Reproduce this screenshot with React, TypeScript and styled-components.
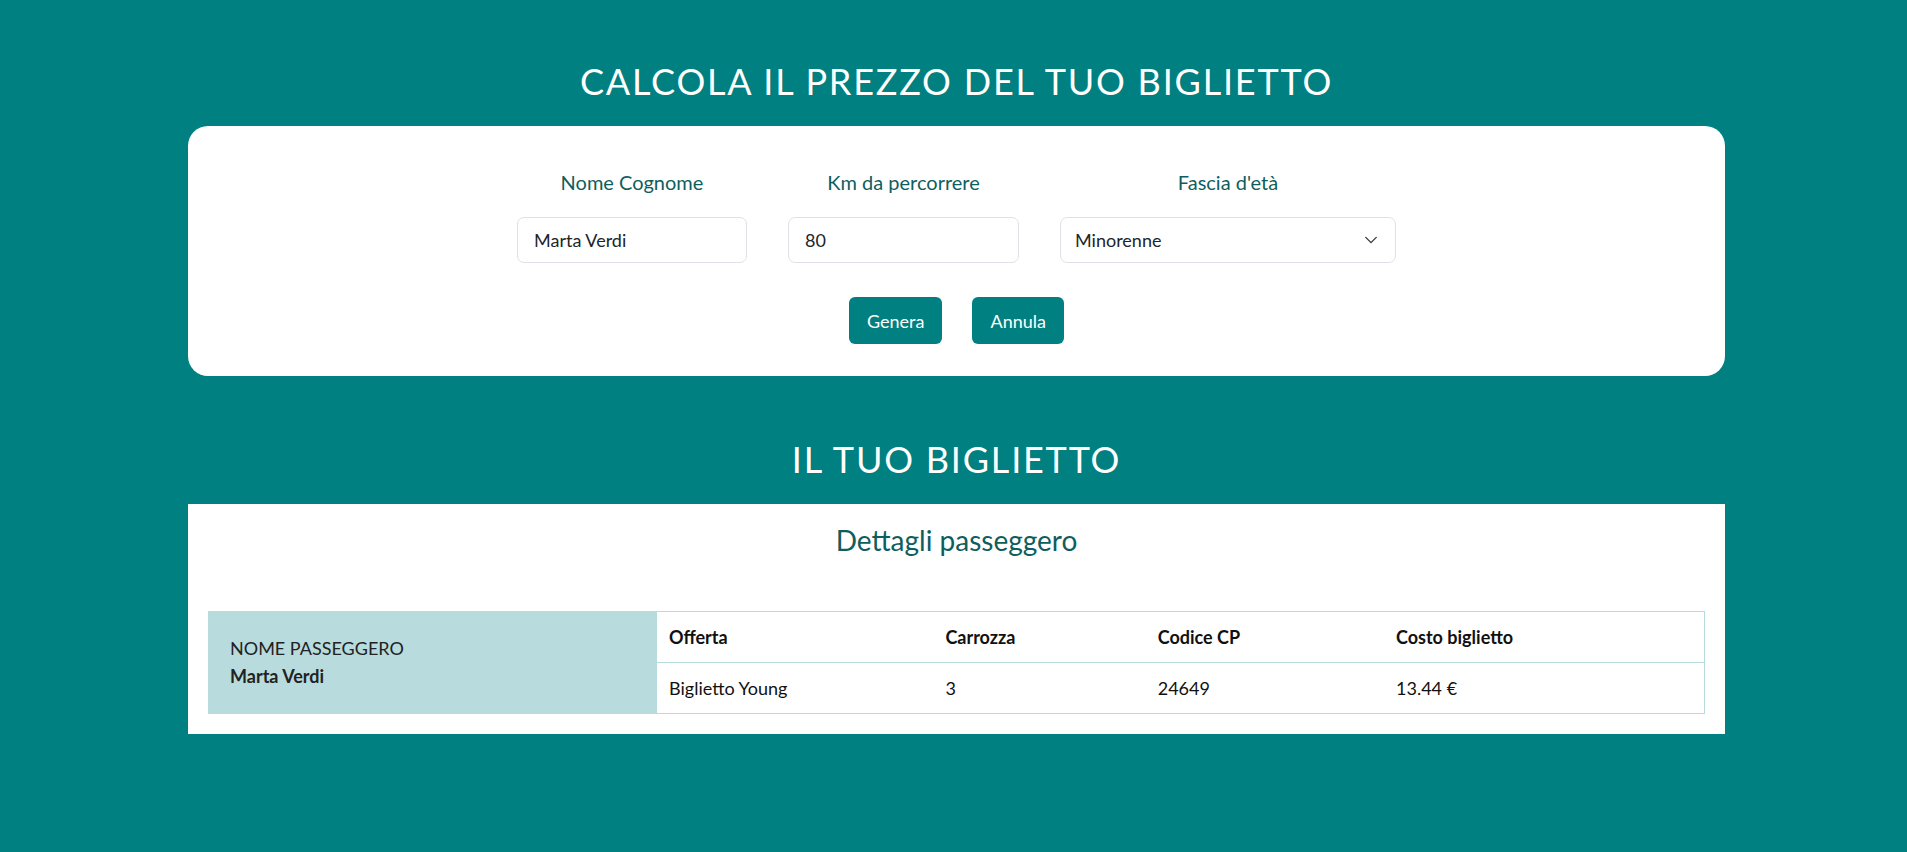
import styled, { createGlobalStyle } from "styled-components";

const teal = "#008080";
const darkTeal = "#0f5e5e";
const paleTeal = "#b8dbdd";

const GlobalStyle = createGlobalStyle`
    * {
        box-sizing: border-box;
    }
    body {
        margin: 0;
        background-color: ${teal};
        font-family: Lato, "Open Sans", sans-serif;
        color: #212529;
    }
`

const Page = styled.main`
    min-height: 100vh;
    padding: 60px 182px 40px 188px;
    background-color: ${teal};
`

const SectionTitle = styled.h1`
    margin: 0 0 23px;
    font-size: 36px;
    line-height: 1.2;
    font-weight: 400;
    letter-spacing: 1.8px;
    color: #ffffff;
    text-align: center;
`

const FormCard = styled.section`
    background-color: #ffffff;
    border-radius: 20px;
    padding: 44px 20px 32px;
    margin-bottom: 62px;
`

const FieldsRow = styled.div`
    display: flex;
    justify-content: center;
    gap: 41px;
`

const Field = styled.label<{ $width: number }>`
    display: flex;
    flex-direction: column;
    align-items: stretch;
    width: ${(p) => p.$width}px;
`

const FieldLabel = styled.span`
    font-size: 20px;
    line-height: 1.2;
    color: ${darkTeal};
    text-align: center;
    margin-bottom: 23px;
`

const TextInput = styled.input`
    height: 46px;
    padding: 0 16px;
    border: 1px solid #dee2e6;
    border-radius: 7px;
    font-family: inherit;
    font-size: 18px;
    color: #212529;
    background: #fff;
    outline: none;
`

const SelectWrap = styled.div`
    position: relative;
`

const Select = styled.select`
    width: 100%;
    height: 46px;
    padding: 0 40px 0 14px;
    border: 1px solid #dee2e6;
    border-radius: 7px;
    font-family: inherit;
    font-size: 18px;
    color: #212529;
    background: #fff;
    appearance: none;
    outline: none;
`

const Chevron = styled.svg`
    position: absolute;
    right: 18px;
    top: 50%;
    width: 14px;
    height: 14px;
    margin-top: -7px;
    pointer-events: none;
`

const ButtonsRow = styled.div`
    display: flex;
    justify-content: center;
    gap: 30px;
    margin-top: 34px;
`

const Button = styled.button`
    height: 47px;
    padding: 0 18px;
    border: none;
    border-radius: 6px;
    background-color: ${teal};
    color: #ffffff;
    font-family: inherit;
    font-size: 18px;
    cursor: pointer;
`

const TicketCard = styled.section`
    background-color: #ffffff;
    padding: 20px 20px 20px;
`

const TicketSubtitle = styled.h3`
    margin: 0 0 53px;
    font-size: 28px;
    line-height: 1.2;
    font-weight: 400;
    color: ${darkTeal};
    text-align: center;
`

const TicketBody = styled.div`
    display: flex;
`

const PassengerPanel = styled.div`
    flex: 0 0 449px;
    background-color: ${paleTeal};
    padding: 0 22px;
    display: flex;
    flex-direction: column;
    justify-content: center;
    font-size: 18px;
    line-height: 28px;
    color: #222;
`

const PassengerName = styled.div`
    font-weight: 700;
`

const Table = styled.table`
    flex: 1;
    border-collapse: collapse;
    font-size: 18px;
    color: #111;
`

const Cell = styled.td<{ $head?: boolean }>`
    height: 51px;
    padding: 0 12px;
    border-top: 1px solid ${paleTeal};
    border-bottom: 1px solid ${paleTeal};
    font-weight: ${(p) => (p.$head ? 700 : 400)};
    text-align: left;
    vertical-align: middle;
    &:last-child {
        border-right: 1px solid ${paleTeal};
    }
`

const columns = [
    { title: "Offerta", value: "Biglietto Young", width: 276 },
    { title: "Carrozza", value: "3", width: 212 },
    { title: "Codice CP", value: "24649", width: 238 },
    { title: "Costo biglietto", value: "13.44 €", width: 320 },
];

function App() {
    return (
        <Page>
            <GlobalStyle />
            <SectionTitle>CALCOLA IL PREZZO DEL TUO BIGLIETTO</SectionTitle>
            <FormCard>
                <FieldsRow>
                    <Field $width={230}>
                        <FieldLabel>Nome Cognome</FieldLabel>
                        <TextInput defaultValue="Marta Verdi" />
                    </Field>
                    <Field $width={231}>
                        <FieldLabel>Km da percorrere</FieldLabel>
                        <TextInput defaultValue="80" />
                    </Field>
                    <Field $width={336}>
                        <FieldLabel>Fascia d'età</FieldLabel>
                        <SelectWrap>
                            <Select defaultValue="minorenne">
                                <option value="minorenne">Minorenne</option>
                                <option value="maggiorenne">Maggiorenne</option>
                                <option value="over65">Over 65</option>
                            </Select>
                            <Chevron viewBox="0 0 16 16">
                                <path d="M2 5l6 6 6-6" fill="none" stroke="#343a40" strokeWidth="1.6" strokeLinecap="round" strokeLinejoin="round" />
                            </Chevron>
                        </SelectWrap>
                    </Field>
                </FieldsRow>
                <ButtonsRow>
                    <Button>Genera</Button>
                    <Button>Annula</Button>
                </ButtonsRow>
            </FormCard>

            <SectionTitle>IL TUO BIGLIETTO</SectionTitle>
            <TicketCard>
                <TicketSubtitle>Dettagli passeggero</TicketSubtitle>
                <TicketBody>
                    <PassengerPanel>
                        <div>NOME PASSEGGERO</div>
                        <PassengerName>Marta Verdi</PassengerName>
                    </PassengerPanel>
                    <Table>
                        <colgroup>
                            {columns.map((c) => (
                                <col key={c.title} style={{ width: c.width }} />
                            ))}
                        </colgroup>
                        <tbody>
                            <tr>
                                {columns.map((c) => (
                                    <Cell key={c.title} $head>{c.title}</Cell>
                                ))}
                            </tr>
                            <tr>
                                {columns.map((c) => (
                                    <Cell key={c.title}>{c.value}</Cell>
                                ))}
                            </tr>
                        </tbody>
                    </Table>
                </TicketBody>
            </TicketCard>
        </Page>
    )
}

export default App
